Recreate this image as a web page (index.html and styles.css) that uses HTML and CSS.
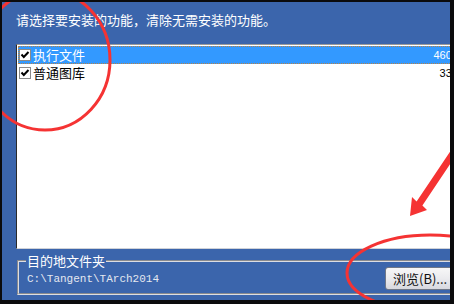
FILE: index.html
```html
<!DOCTYPE html>
<html>
<head>
<meta charset="utf-8">
<link rel="stylesheet" href="styles.css">
</head>
<body>
<div class="panel">
  <div class="title">请选择要安装的功能，清除无需安装的功能。</div>
  <div class="listbox">
    <div class="row selected">
      <svg class="chk" width="12" height="12" viewBox="0 0 12 12"><rect x="0.5" y="0.5" width="11" height="11" fill="#fff" stroke="#8a8a8a"/><path d="M2.5 5.5 L4.8 8 L9.5 3" fill="none" stroke="#000" stroke-width="2"/></svg>
      <span class="name">执行文件</span>
      <span class="size">46080</span>
    </div>
    <div class="row">
      <svg class="chk" width="12" height="12" viewBox="0 0 12 12"><rect x="0.5" y="0.5" width="11" height="11" fill="#fff" stroke="#8a8a8a"/><path d="M2.5 5.5 L4.8 8 L9.5 3" fill="none" stroke="#000" stroke-width="2"/></svg>
      <span class="name">普通图库</span>
      <span class="size">3359</span>
    </div>
  </div>
  <fieldset class="dest">
    <legend class="dest-label">目的地文件夹</legend>
    <div class="dest-row">
      <span class="path">C:\Tangent\TArch2014</span>
      <button class="browse">浏览(B)...</button>
    </div>
  </fieldset>
  <svg class="marks" width="454" height="304" viewBox="0 0 454 304">
    <ellipse cx="45" cy="60" rx="65" ry="70" fill="none" stroke="#f53333" stroke-width="3"/>
    <ellipse cx="430" cy="273" rx="83" ry="38" fill="none" stroke="#f53333" stroke-width="3"/>
    <polygon points="410,216 412,197 416.6,201.5 461.1,135.1 466.9,139.1 422.4,205.5 427,210" fill="#f53333"/>
  </svg>
</div>
</body>
</html>
```

FILE: styles.css
```css
html, body {
  margin: 0;
  padding: 0;
}
body {
  width: 454px;
  height: 304px;
  overflow: hidden;
  background: #0b0b0d;
  font-family: "Noto Sans CJK SC", "Liberation Sans", sans-serif;
}
.panel {
  position: relative;
  margin: 2px 0 0 2px;
  width: 448px;
  height: 298px;
  overflow: hidden;
  background: #3b65ac;
}
.title {
  margin-top: 10px;
  padding-left: 14px;
  font-size: 13px;
  line-height: 16px;
  color: #fff;
  white-space: nowrap;
}
.listbox {
  margin: 16px 0 0 14px;
  width: 460px;
  height: 205px;
  box-sizing: border-box;
  background: #fff;
  border-top: 1px solid #9a9a9a;
  border-left: 1px solid #2a2a2a;
  border-bottom: 1px solid #cfd2d8;
  padding: 1px 0 0 1px;
}
.row {
  display: flex;
  align-items: center;
  height: 18px;
  font-size: 13px;
  line-height: 18px;
  color: #000;
}
.row.selected {
  background: #3399ff;
  color: #fff;
  outline: 1px dotted #b4824a;
  outline-offset: -1px;
}
.chk {
  display: block;
  margin-left: 1px;
  flex: none;
}
.name {
  margin-left: 2px;
  white-space: nowrap;
}
.size {
  margin-left: auto;
  padding-right: 12px;
  font-family: "Liberation Sans", sans-serif;
  font-size: 11px;
}
.dest {
  margin: 6px 0 0 15px;
  width: 453px;
  min-width: 0;
  box-sizing: border-box;
  padding: 0 8px 3px 8px;
  border: 2px groove #dcdde2;
}
.dest-label {
  padding: 0 1px;
  margin-left: -1px;
  font-size: 13px;
  line-height: 12px;
  color: #fff;
}
.dest-row {
  display: flex;
  align-items: center;
  height: 23px;
}
.path {
  font-family: "Liberation Mono", monospace;
  font-size: 11px;
  color: #e4e8f0;
  white-space: nowrap;
}
.browse {
  margin-left: auto;
  width: 75px;
  height: 23px;
  box-sizing: border-box;
  padding: 0 0 0 7px;
  text-align: left;
  font-family: "Noto Sans CJK SC", "Liberation Sans", sans-serif;
  font-size: 13px;
  line-height: 21px;
  color: #111;
  border: 1px solid #707888;
  border-radius: 3px;
  background: linear-gradient(#f7f7f7, #ebebee 50%, #d7d8df);
  white-space: nowrap;
}
.marks {
  position: absolute;
  left: -2px;
  top: -2px;
  pointer-events: none;
}
```
